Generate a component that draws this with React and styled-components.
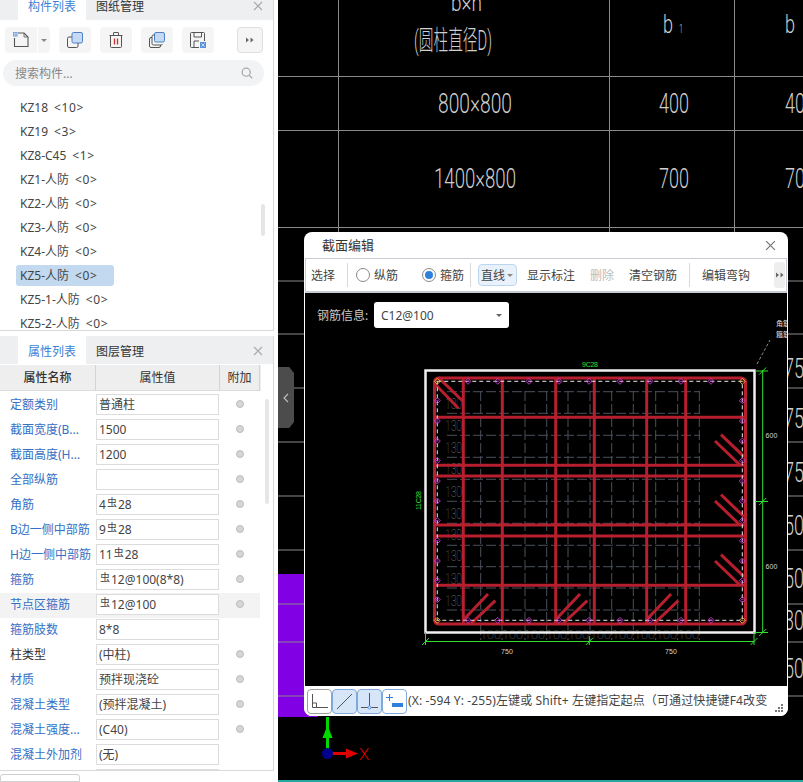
import React from 'react';
import styled, { createGlobalStyle } from 'styled-components';

const GlobalStyle = createGlobalStyle`
  html, body {
    margin: 0;
    padding: 0;
    overflow: hidden;
    background: #000;
  }
  * { box-sizing: border-box; }
`;

const FONT = '"Noto Sans", "Noto Sans CJK SC", sans-serif';

const Page = styled.div`
  display: flex;
  width: 803px;
  height: 782px;
  overflow: hidden;
  font-family: ${FONT};
  font-size: 12px;
  color: #444;
`;

/* ---------- left side ---------- */

const Sidebar = styled.aside`
  display: flex;
  flex-direction: column;
  flex: 0 0 278px;
  height: 782px;
  background: #fff;
`;

const Panel = styled.section`
  position: relative;
  display: flex;
  flex-direction: column;
  width: 274px;
  height: ${p => p.$height}px;
  margin-top: ${p => p.$top || 0}px;
  border-right: 1px solid #d9d9d9;
  border-bottom: 1px solid #d9d9d9;
  overflow: hidden;
`;

const TabBar = styled.div`
  display: flex;
  align-items: stretch;
  flex: 0 0 ${p => p.$height}px;
  padding-left: 18px;
  background: #eeeff1;
  position: relative;
`;

const Tab = styled.div`
  width: 68px;
  margin-right: ${p => (p.$active ? 10 : 0)}px;
  padding-left: ${p => (p.$active ? 10 : 0)}px;
  padding-top: ${p => p.$top}px;
  line-height: 14px;
  font-size: 12px;
  color: ${p => (p.$active ? '#3b7fd6' : '#333')};
  background: ${p => (p.$active ? '#fff' : 'transparent')};
  white-space: nowrap;
`;

const Grip = styled.svg`
  position: absolute;
  left: 1px;
  top: ${p => p.$top}px;
`;

const CloseMark = styled.svg`
  position: absolute;
  right: ${p => p.$right}px;
  top: ${p => p.$top}px;
`;

const Toolbar = styled.div`
  display: flex;
  align-items: center;
  height: 26px;
  margin-top: 7px;
  padding-left: 5px;
`;

const ToolButton = styled.button`
  display: flex;
  align-items: center;
  justify-content: center;
  width: ${p => p.$w || 32}px;
  height: 26px;
  margin: 0 ${p => p.$gap ?? 9}px 0 0;
  padding: 0;
  border: ${p => (p.$outlined ? '1px solid #dedede' : 'none')};
  border-radius: ${p => p.$radius || '4px'};
  background: #f5f5f6;
`;

const Caret = styled.span`
  width: 0;
  height: 0;
  border-left: 3px solid transparent;
  border-right: 3px solid transparent;
  border-top: 3px solid ${p => p.$color || '#888'};
`;

const SearchBox = styled.div`
  display: flex;
  align-items: center;
  justify-content: space-between;
  width: 261px;
  height: 26px;
  margin: 7px 0 0 3px;
  padding: 0 11px 0 12px;
  border-radius: 13px;
  background: #f2f3f5;
  font-size: 12px;
  color: #888;
`;

const List = styled.div`
  flex: 1;
  padding-top: 9px;
  overflow: hidden;
`;

const ListRow = styled.div`
  display: flex;
  align-items: center;
  height: 24px;
  padding-left: 16px;
`;

const ListLabel = styled.span`
  height: 21px;
  line-height: 21px;
  padding: 0 17px 0 4px;
  border-radius: 3px;
  background: ${p => (p.$selected ? '#c3d9ef' : 'transparent')};
  color: #444;
  white-space: nowrap;
`;

const Count = styled.span`
  margin-left: 6px;
  letter-spacing: 0.6px;
`;

const ScrollThumb = styled.div`
  position: absolute;
  left: ${p => p.$left}px;
  top: ${p => p.$top}px;
  width: 4px;
  height: ${p => p.$height}px;
  border-radius: 2px;
  background: #e6e6e6;
`;

const TableHead = styled.div`
  display: grid;
  grid-template-columns: 96px 124px 40px;
  flex: 0 0 25px;
  width: 261px;
  margin-top: 1px;
  background: #eeeeee;
`;

const HeadCell = styled.div`
  line-height: 25px;
  text-align: center;
  color: #333;
  font-weight: ${p => (p.$strong ? 500 : 400)};
  border-right: 1px solid #d4d4d4;
  border-bottom: 1px solid #dcdcdc;
`;

const Rows = styled.div`
  flex: 1;
  padding-top: 2px;
  overflow: hidden;
`;

const PropRow = styled.div`
  display: grid;
  grid-template-columns: 96px 123px 41px;
  align-items: center;
  width: 260px;
  height: 25px;
  padding-bottom: 2px;
  margin-bottom: 0;
  background: ${p => (p.$hover ? '#f3f3f4' : 'transparent')};
`;

const PropLabel = styled.div`
  padding-left: 10px;
  color: ${p => (p.$plain ? '#333' : '#3570c4')};
  white-space: nowrap;
`;

const PropInput = styled.div`
  height: 21px;
  line-height: 19px;
  padding-left: 2px;
  border: 1px solid #dcdcdc;
  background: #fff;
  color: #444;
  white-space: nowrap;
`;

const Grade = styled.span`
  display: inline-block;
  font-size: 10px;
  line-height: 10px;
  transform: translateY(-3px);
  margin: 0 1px;
`;

const Dot = styled.span`
  justify-self: center;
  width: 8px;
  height: 8px;
  border-radius: 50%;
  background: #d6d6d6;
  border: 1px solid #bcbcbc;
`;

const BottomTab = styled.div`
  width: 80px;
  height: 8px;
  margin-top: 3px;
  border: 1px solid #d0d0d0;
  border-radius: 3px 3px 0 0;
`;

/* ---------- right side ---------- */

const Workspace = styled.main`
  position: relative;
  flex: 1;
  height: 782px;
  background: #000;
  overflow: hidden;
`;

const CadLayer = styled.svg`
  position: absolute;
  left: 0;
  top: 0;
`;

const CollapseHandle = styled.div`
  position: absolute;
  left: 0;
  top: 367px;
  display: flex;
  align-items: center;
  justify-content: center;
  width: 16px;
  height: 61px;
  background: #4c4c4c;
  clip-path: polygon(0 0, 70% 0, 100% 10%, 100% 90%, 70% 100%, 0 100%);
`;

const Dialog = styled.div`
  position: absolute;
  left: 26px;
  top: 232px;
  display: flex;
  flex-direction: column;
  width: 484px;
  height: 484px;
  border-radius: 8px;
  background: #fff;
  overflow: hidden;
`;

const DialogTitle = styled.div`
  position: relative;
  flex: 0 0 26px;
  padding-left: 18px;
  line-height: 26px;
  font-size: 13px;
  color: #333;
`;

const DialogBar = styled.div`
  display: flex;
  align-items: center;
  flex: 0 0 35px;
  margin: 0 1px;
  border: 1.5px solid #c8ccd4;
  border-bottom-width: 2px;
  padding-left: 5px;
  position: relative;
`;

const BarText = styled.span`
  width: ${p => p.$w}px;
  margin-left: ${p => p.$left || 0}px;
  color: ${p => (p.$disabled ? '#bbb' : '#444')};
  white-space: nowrap;
`;

const BarSep = styled.span`
  width: 1px;
  height: 24px;
  margin-left: ${p => p.$left}px;
  background: #d8d8d8;
`;

const Radio = styled.span`
  display: flex;
  align-items: center;
  justify-content: center;
  width: 14px;
  height: 14px;
  margin-left: ${p => p.$left}px;
  margin-right: 4px;
  border: 1px solid #888;
  border-radius: 50%;
  background: #fff;
  &::after {
    content: '';
    display: ${p => (p.$on ? 'block' : 'none')};
    width: 8px;
    height: 8px;
    border-radius: 50%;
    background: #2f7fdc;
  }
`;

const ModeButton = styled.span`
  display: flex;
  align-items: center;
  justify-content: space-between;
  width: 39px;
  height: 22px;
  margin-left: 7px;
  padding: 0 3px 0 2px;
  border: 1px solid #bcd6f0;
  border-radius: 4px;
  background: #e9f2fb;
  color: #444;
`;

const MoreButton = styled.span`
  position: absolute;
  right: 1px;
  top: 3px;
  display: flex;
  align-items: center;
  justify-content: center;
  width: 11px;
  height: 26px;
  border-radius: 3px;
  background: #eeeeee;
`;

const DialogCanvas = styled.div`
  position: relative;
  flex: 1;
  margin: 0 1px;
  background: #000;
  overflow: hidden;
`;

const CanvasSvg = styled.svg`
  display: block;
`;

const InfoRow = styled.div`
  position: absolute;
  left: 12px;
  top: 9px;
  display: flex;
  align-items: center;
`;

const InfoLabel = styled.span`
  width: 57px;
  color: #c8c8c8;
`;

const InfoSelect = styled.div`
  display: flex;
  align-items: center;
  justify-content: space-between;
  width: 135px;
  height: 26px;
  padding: 0 7px;
  border-radius: 3px;
  background: #fff;
  color: #444;
`;

const StatusBar = styled.div`
  position: relative;
  display: flex;
  align-items: center;
  flex: 0 0 30px;
  padding-left: 3px;
  background: #fff;
  overflow: hidden;
`;

const ModeIcon = styled.span`
  display: flex;
  align-items: center;
  justify-content: center;
  flex: 0 0 25px;
  height: 25px;
  border: 1px solid ${p => (p.$plain ? '#a0a0a0' : '#7ea9da')};
  border-radius: 4px;
  background: ${p => (p.$active ? '#d6e5f8' : '#fff')};
`;

const StatusText = styled.span`
  width: 361px;
  margin-left: 1px;
  margin-top: -2px;
  letter-spacing: 0.13px;
  color: #444;
  white-space: nowrap;
  overflow: hidden;
`;

const ResizeGrip = styled.svg`
  position: absolute;
  right: 5px;
  bottom: 4px;
`;

const BottomStrip = styled.div`
  position: absolute;
  left: 0;
  right: 0;
  bottom: 0;
  height: 2px;
  background: #23a5a0;
`;

/* ---------- data ---------- */

const components = [
  ['KZ18', '<10>'],
  ['KZ19', '<3>'],
  ['KZ8-C45', '<1>'],
  ['KZ1-人防', '<0>'],
  ['KZ2-人防', '<0>'],
  ['KZ3-人防', '<0>'],
  ['KZ4-人防', '<0>'],
  ['KZ5-人防', '<0>', true],
  ['KZ5-1-人防', '<0>'],
  ['KZ5-2-人防', '<0>'],
];

const G = <Grade>虫</Grade>;

const props = [
  { label: '定额类别', value: '普通柱' },
  { label: '截面宽度(B...', value: '1500' },
  { label: '截面高度(H...', value: '1200' },
  { label: '全部纵筋', value: '' },
  { label: '角筋', value: <>4{G}28</> },
  { label: 'B边一侧中部筋', value: <>9{G}28</> },
  { label: 'H边一侧中部筋', value: <>11{G}28</> },
  { label: '箍筋', value: <>{G}12@100(8*8)</> },
  { label: '节点区箍筋', value: <>{G}12@100</>, hover: true },
  { label: '箍筋肢数', value: '8*8', noDot: true },
  { label: '柱类型', value: '(中柱)', plain: true },
  { label: '材质', value: '预拌现浇砼' },
  { label: '混凝土类型', value: '(预拌混凝土)' },
  { label: '混凝土强度...', value: '(C40)' },
  { label: '混凝土外加剂', value: '(无)', noDot: true },
  { label: '', value: '', noDot: true },
];

/* ---------- small drawings ---------- */

const GripDots = ({ top }) => (
  <Grip $top={top} width="7" height="14" viewBox="0 0 7 14" fill="#8a8a8a">
    {[1, 5.5, 10].map(y => [1, 5].map(x => <rect key={`${x}-${y}`} x={x - 1} y={y} width="2" height="2" />))}
  </Grip>
);

const CloseIcon = ({ right, top, size = 10, color = '#a8a8a8' }) => (
  <CloseMark $right={right} $top={top} width={size} height={size} viewBox="0 0 10 10" stroke={color} strokeWidth="1.1" fill="none">
    <path d="M1 1l8 8M9 1l-8 8" />
  </CloseMark>
);

const MoreIcon = () => (
  <svg width="8" height="6" viewBox="0 0 8 6" fill="#666">
    <path d="M0 0.5l3 2.5-3 2.5zM4.5 0.5l3 2.5-3 2.5z" />
  </svg>
);

const NewIcon = () => (
  <svg width="17" height="16" viewBox="0 0 17 16" fill="none">
    <path d="M1.5 6v8.5h13.5V5L11 1H5" stroke="#555" strokeWidth="1.1" />
    <path d="M11 1v4h4" stroke="#555" strokeWidth="0.8" />
    <rect x="0" y="0" width="4.5" height="4.5" fill="#5b93dc" />
    <path d="M0 1.5h4.5M0 3h4.5M1.5 0v4.5M3 0v4.5" stroke="#d6e5f8" strokeWidth="0.5" />
  </svg>
);

const CopyIcon = () => (
  <svg width="16" height="16" viewBox="0 0 16 16" fill="none">
    <rect x="5" y="0.5" width="10.5" height="10.5" rx="1.5" fill="#c5d9f3" stroke="#4e82c8" />
    <path d="M5 5H2a1.5 1.5 0 0 0-1.5 1.5V14A1.5 1.5 0 0 0 2 15.500h7.500A1.500 1.500 0 0 0 11 14v-3" stroke="#555" />
  </svg>
);

const TrashIcon = () => (
  <svg width="14" height="16" viewBox="0 0 14 16" fill="none">
    <path d="M0.500 3.500h13M4.500 3.500V1a.5.5 0 0 1 .5-.5h4a.5.5 0 0 1 .5.500v2.500" stroke="#555" />
    <path d="M1.500 3.500v11a1 1 0 0 0 1 1h9a1 1 0 0 0 1-1v-11" stroke="#555" />
    <path d="M5.500 6.500v6M8.500 6.500v6" stroke="#c9302c" strokeWidth="1.3" />
  </svg>
);

const LayersIcon = () => (
  <svg width="16" height="16" viewBox="0 0 16 16" fill="none">
    <rect x="5.500" y="0.500" width="10" height="9.500" rx="1.500" fill="#c5d9f3" stroke="#4e82c8" />
    <path d="M5.500 3H4A1.500 1.500 0 0 0 3 4.500v7A1.500 1.500 0 0 0 4.500 13h8a1.500 1.500 0 0 0 1-1" stroke="#555" />
    <path d="M3 5.500H2A1.500 1.500 0 0 0 .5 7v7A1.500 1.500 0 0 0 2 15.500h8A1.500 1.500 0 0 0 11.500 14v-1" stroke="#555" />
  </svg>
);

const SaveIcon = () => (
  <svg width="16" height="16" viewBox="0 0 16 16" fill="none">
    <path d="M9 15.500H1.500a1 1 0 0 1-1-1v-13a1 1 0 0 1 1-1h12a1 1 0 0 1 1 1V9" stroke="#555" />
    <path d="M4 .5v4.500h7.500V.5M4 15.500V9h5" stroke="#555" />
    <rect x="10" y="10" width="6" height="6" fill="#5b93dc" />
    <path d="M11.500 11.500l3 3M14.500 11.500l-3 3" stroke="#e4eefb" strokeWidth="0.8" />
  </svg>
);

const SearchIcon = () => (
  <svg width="12" height="12" viewBox="0 0 12 12" fill="none" stroke="#aaa" strokeWidth="1.300">
    <circle cx="5.200" cy="5.200" r="4" />
    <path d="M8.200 8.200l3 3" />
  </svg>
);

const CornerIcon = () => (
  <svg width="17" height="15" viewBox="0 0 17 15" fill="none" stroke="#555">
    <path d="M1.500 0v13.500H17M1.500 9h4v4.500" />
  </svg>
);

const SlashIcon = () => (
  <svg width="17" height="17" viewBox="0 0 17 17" fill="none" stroke="#555">
    <path d="M1 16L16 1" />
  </svg>
);

const PerpIcon = () => (
  <svg width="17" height="17" viewBox="0 0 17 17" fill="none">
    <path d="M8.500 0v13M0 14.500h17" stroke="#555" />
    <circle cx="8.500" cy="14.500" r="1.500" stroke="#5b93dc" fill="#d6e5f8" />
  </svg>
);

const PlusBarIcon = () => (
  <svg width="17" height="15" viewBox="0 0 17 15" fill="none">
    <path d="M3.500 0v7M0 3.500h7" stroke="#2f7fdc" strokeWidth="1.100" />
    <rect x="6" y="9" width="11" height="4" fill="#2f7fdc" />
  </svg>
);

/* ---------- CAD drawing behind the dialog ---------- */

const CadText = ({ x, y, w, size = 27, children, color = '#cfcfcf' }) => (
  <text x={x} y={y} fontSize={size} fill={color} textLength={w} lengthAdjust="spacingAndGlyphs"
    fontFamily='Roboto, "Noto Sans CJK SC", sans-serif' fontWeight="300">{children}</text>
);

const BackgroundCad = () => (
  <CadLayer width="525" height="782" viewBox="278 0 525 782">
    <rect x="278" y="574" width="40" height="143" fill="#8200e4" />
    <g stroke="#8a8a8a" strokeWidth="1">
      {[76.500, 130.500, 227.500, 281, 334, 388, 442, 496, 550, 604, 642, 696].map(y => (
        <line key={y} x1="278" x2="803" y1={y} y2={y} />
      ))}
      {[338.500, 609.500, 734.500].map(x => (
        <line key={x} x1={x} x2={x} y1="0" y2="232" />
      ))}
    </g>
    <CadText x={451} y={11} w={31} size={24}>b×h</CadText>
    <CadText x={414} y={50} w={78} size={27}>(圆柱直径D)</CadText>
    <CadText x={438} y={113} w={74}>800×800</CadText>
    <CadText x={434} y={188} w={82}>1400×800</CadText>
    <CadText x={663} y={33} w={10} size={25}>b</CadText>
    <CadText x={679} y={33} w={4} size={12}>1</CadText>
    <CadText x={659} y={113} w={30}>400</CadText>
    <CadText x={659} y={188} w={30}>700</CadText>
    <CadText x={785} y={33} w={10} size={25}>b</CadText>
    <CadText x={785} y={113} w={30}>400</CadText>
    <CadText x={785} y={188} w={30}>700</CadText>
    {[[378, '75'], [428, '75'], [482, '75'], [535, '50'], [588, '50'], [630, '30'], [678, '50']].map(([y, t]) => (
      <CadText key={y} x={784} y={y} w={20} size={27}>{t}</CadText>
    ))}
    {/* axis gizmo */}
    <path d="M327.500 717v36" stroke="#00d800" strokeWidth="3" />
    <path d="M327.500 725l5 13h-10z" fill="#00d800" />
    <path d="M330 753.500h20" stroke="#e00000" strokeWidth="3" />
    <path d="M358 753.500l-12-5v10z" fill="#e00000" />
    <circle cx="327.500" cy="753.500" r="5.500" fill="#00008c" />
    <text x="359" y="760" fontSize="17" fill="#d80000" fontFamily='Roboto, sans-serif' fontWeight="300">X</text>
  </CadLayer>
);

/* ---------- rebar section inside the dialog ---------- */

const RED = '#b81f2e';
const GREEN = '#30e030';
const VERT = [463.300, 502.300, 555.700, 594.300, 646.700, 685.700];
const HORZ = [417.300, 465.300, 476, 525, 536, 585.300];
const GRID_X = [480.700, 502, 525, 546.700, 568, 590, 611.700, 633.300, 655.700, 677.700, 699.300];
const GRID_Y = [391.700, 413.300, 435.300, 457.300, 479.300, 501.300, 523.300, 545.300, 566.700, 588, 610];
const BAR_X = [468, 497.700, 529, 559, 589, 620, 650, 681, 711];
const BAR_Y = [400.700, 421, 441, 460.700, 481, 501, 520.700, 540.700, 561, 580.700, 599.700];
const SIDE_TEXT = [403, 424.700, 446.700, 468, 490.700, 512.700, 534, 555, 577.700, 599.700];

const Bar = ({ x, y, color = '#c83cd0' }) => (
  <g fill="none" stroke={color} strokeWidth="0.9">
    <path d={`M${x} ${y - 3}l3 3-3 3-3-3z`} />
    <path d={`M${x - 1.200} ${y}h2.400`} />
  </g>
);

const Slash = ({ x, y, kind }) => {
  if (kind === 'right') {
    return <path d={`M${x} ${y}l25 24M${x + 6} ${y - 6.300}l23 22`} />;
  }
  return <path d={`M${x} ${y}l24-25.300M${x + 6.700} ${y + 4.700}l24.600-23.300`} />;
};

const Tick = ({ x, y }) => <path d={`M${x - 3.500} ${y + 3.500}l7-7`} stroke={GREEN} strokeWidth="1" />;

const RebarSection = () => (
  <CanvasSvg width="482" height="393" viewBox="305 293 482 393">
    {/* bottom-layer grey dimension grid */}
    <g stroke="#4a515a" strokeWidth="1" strokeDasharray="10 3" fill="none">
      {GRID_X.map(x => <line key={x} x1={x} x2={x} y1="391" y2="640" />)}
      {GRID_Y.map(y => <line key={y} x1="447" x2="700" y1={y} y2={y} />)}
    </g>
    <g fontFamily='Roboto, sans-serif' fontWeight="100" fill="#7a8088">
      {SIDE_TEXT.map(y => (
        <text key={y} x="445" y={y + 6} fontSize="15" textLength="17" lengthAdjust="spacingAndGlyphs">130</text>
      ))}
      {[480, 502, 524, 546, 568, 590, 612, 634, 656, 678].map(x => (
        <text key={x} x={x} y="639" fontSize="13" textLength="21" lengthAdjust="spacingAndGlyphs">100</text>
      ))}
    </g>

    {/* concrete outline */}
    <rect x="425.500" y="370.500" width="329" height="262" fill="none" stroke="#f0f0f0" strokeWidth="2.500" />

    {/* stirrups */}
    <g stroke={RED} strokeWidth="3" fill="none">
      <rect x="434.500" y="378" width="311" height="246" rx="4" />
      {VERT.map(x => <line key={x} x1={x} x2={x} y1="378" y2="624" />)}
      {HORZ.map(y => <line key={y} x1="433" x2="746" y1={y} y2={y} />)}
      <path d="M434.300 383.300l24 25M438.300 377.300l24.400 23.700" />
      {[0, 60, 120].map(d => <Slash key={d} kind="right" x={715} y={441 + d} />)}
      {[0, 92, 183].map(d => <Slash key={d} x={464 + d} y={619.300} />)}
    </g>

    {/* main bar line */}
    <rect x="437.300" y="381.300" width="305" height="239" fill="none" stroke="#e8e8e8" strokeWidth="1" strokeDasharray="4 3" />
    {BAR_X.map(x => <React.Fragment key={x}><Bar x={x} y={381.300} /><Bar x={x} y={620.300} /></React.Fragment>)}
    {BAR_Y.map(y => <React.Fragment key={y}><Bar x={437.300} y={y} /><Bar x={742.300} y={y} /></React.Fragment>)}
    {[[437.300, 381.300], [742.300, 381.300], [437.300, 620.300], [742.300, 620.300]].map(([x, y]) => (
      <Bar key={`${x}-${y}`} x={x} y={y} color="#e8b040" />
    ))}

    {/* dimensions */}
    <g stroke={GREEN} strokeWidth="1" fill="none">
      <path d="M762.700 370v262.500M755 371h13M755 501.500h13M755 632.500h13" />
      <path d="M425 641.500h329M425.500 632v13M589.300 636v9M754 632v13" />
    </g>
    <Tick x={425.500} y={641.500} /><Tick x={589.300} y={641.500} /><Tick x={754} y={641.500} />
    <Tick x={762.700} y={371} /><Tick x={762.700} y={501.500} /><Tick x={762.700} y={632.500} />
    <g fontFamily='"Liberation Sans", sans-serif' fontSize="7">
      <text x="501" y="653.500" fill="#d8d8d8" textLength="12">750</text>
      <text x="665" y="653.500" fill="#d8d8d8" textLength="12">750</text>
      <text x="765.500" y="438" fill="#d8d8d8" textLength="12">600</text>
      <text x="765.500" y="569" fill="#d8d8d8" textLength="12">600</text>
      <text x="582" y="367" fill={GREEN} textLength="16">9C28</text>
      <text transform="translate(421 510) rotate(-90)" fill={GREEN} textLength="19">11C28</text>
    </g>
    <path d="M757 364l13-24" stroke="#8a8a8a" strokeWidth="1" strokeDasharray="3 2" fill="none" />
    <g fontFamily='"Noto Sans CJK SC", sans-serif' fontSize="7" fill="#e0e0e0">
      <text x="776" y="326">角筋</text>
      <text x="776" y="337">箍筋</text>
    </g>
  </CanvasSvg>
);

const App = () => (
  <Page>
    <GlobalStyle />
    <Sidebar>
      <Panel $height={332}>
        <GripDots top={0} />
        <TabBar $height={20}>
          <Tab $active $top={0}>构件列表</Tab>
          <Tab $top={0}>图纸管理</Tab>
          <CloseIcon right={10} top={1} />
        </TabBar>
        <Toolbar>
          <ToolButton $w={32} $gap={1} $radius="4px 0 0 4px"><NewIcon /></ToolButton>
          <ToolButton $w={12} $radius="0 4px 4px 0"><Caret /></ToolButton>
          <ToolButton><CopyIcon /></ToolButton>
          <ToolButton><TrashIcon /></ToolButton>
          <ToolButton><LayersIcon /></ToolButton>
          <ToolButton $gap={23}><SaveIcon /></ToolButton>
          <ToolButton $w={26} $gap={0} $outlined><MoreIcon /></ToolButton>
        </Toolbar>
        <SearchBox>
          <span>搜索构件...</span>
          <SearchIcon />
        </SearchBox>
        <List>
          {components.map(([name, count, selected]) => (
            <ListRow key={name}>
              <ListLabel $selected={selected}>{name}<Count>{count}</Count></ListLabel>
            </ListRow>
          ))}
        </List>
        <ScrollThumb $left={261} $top={204} $height={32} />
      </Panel>

      <Panel $height={437} $top={5}>
        <GripDots top={8} />
        <TabBar $height={28}>
          <Tab $active $top={9}>属性列表</Tab>
          <Tab $top={9}>图层管理</Tab>
          <CloseIcon right={10} top={10} />
        </TabBar>
        <TableHead>
          <HeadCell $strong>属性名称</HeadCell>
          <HeadCell>属性值</HeadCell>
          <HeadCell>附加</HeadCell>
        </TableHead>
        <Rows>
          {props.map((row, i) => (
            <PropRow key={i} $hover={row.hover}>
              <PropLabel $plain={row.plain}>{row.label}</PropLabel>
              <PropInput>{row.value}</PropInput>
              {row.noDot ? <span /> : <Dot />}
            </PropRow>
          ))}
        </Rows>
        <ScrollThumb $left={265} $top={63} $height={105} />
      </Panel>
      <BottomTab />
    </Sidebar>

    <Workspace>
      <BackgroundCad />
      <CollapseHandle>
        <svg width="6" height="10" viewBox="0 0 6 10" fill="none" stroke="#bbb" strokeWidth="1.200">
          <path d="M5 1L1 5l4 4" />
        </svg>
      </CollapseHandle>

      <Dialog>
        <DialogTitle>
          截面编辑
          <CloseIcon right={12} top={8} size={11} color="#777" />
        </DialogTitle>
        <DialogBar>
          <BarText $w={24}>选择</BarText>
          <BarSep $left={12} />
          <Radio $left={8} />
          <BarText $w={24}>纵筋</BarText>
          <Radio $left={24} $on />
          <BarText $w={24}>箍筋</BarText>
          <BarSep $left={6} />
          <ModeButton>直线<Caret /></ModeButton>
          <BarText $w={48} $left={10}>显示标注</BarText>
          <BarText $w={24} $left={15} $disabled>删除</BarText>
          <BarText $w={48} $left={15}>清空钢筋</BarText>
          <BarSep $left={12} />
          <BarText $w={48} $left={12}>编辑弯钩</BarText>
          <MoreButton><MoreIcon /></MoreButton>
        </DialogBar>
        <DialogCanvas>
          <RebarSection />
          <InfoRow>
            <InfoLabel>钢筋信息:</InfoLabel>
            <InfoSelect>C12@100<Caret $color="#666" /></InfoSelect>
          </InfoRow>
        </DialogCanvas>
        <StatusBar>
          <ModeIcon $plain><CornerIcon /></ModeIcon>
          <ModeIcon $active><SlashIcon /></ModeIcon>
          <ModeIcon $active><PerpIcon /></ModeIcon>
          <ModeIcon><PlusBarIcon /></ModeIcon>
          <StatusText>(X: -594 Y: -255)左键或 Shift+ 左键指定起点（可通过快捷键F4改变</StatusText>
          <ResizeGrip width="8" height="8" viewBox="0 0 8 8" fill="#777">
            <rect x="6" y="0" width="2" height="2" />
            <rect x="3" y="3" width="2" height="2" /><rect x="6" y="3" width="2" height="2" />
            <rect x="0" y="6" width="2" height="2" /><rect x="3" y="6" width="2" height="2" /><rect x="6" y="6" width="2" height="2" />
          </ResizeGrip>
        </StatusBar>
      </Dialog>
      <BottomStrip />
    </Workspace>
  </Page>
);

export default App;
